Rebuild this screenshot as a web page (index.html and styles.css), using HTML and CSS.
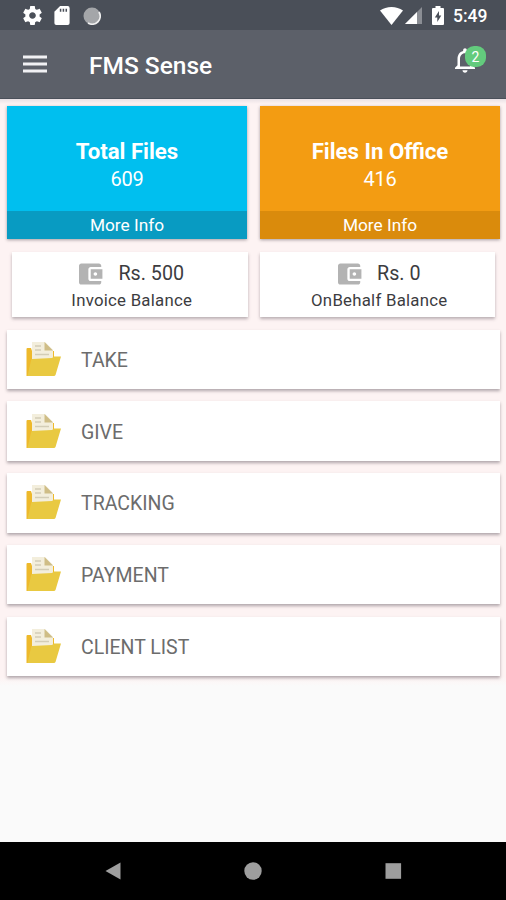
FILE: index.html
```html
<!DOCTYPE html>
<html lang="en">
<head>
<meta charset="utf-8">
<title>FMS Sense</title>
<link rel="stylesheet" href="styles.css">
</head>
<body>
<svg class="defs" width="0" height="0">
  <symbol id="folder" viewBox="0 0 36 36">
    <path fill="#eeb92b" d="M.5 7q0-1 1-1H5l1 3h22v11L5 34H.5z"/>
    <path fill="#f3eedc" d="M6 0h13l8 8v10H6z"/>
    <path fill="#cfbd86" d="M18.500 0v8.500H27z"/>
    <path stroke="#d3cdb6" stroke-width="1.300" d="M9 4h6M9 8h6M9 12.500h14"/>
    <path fill="#e9c941" d="M6 17l20-1 2-1.500h7L29.500 33q-.5 1-1.500 1H1.500L5 18.500q.2-1.500 1-1.500z"/>
  </symbol>
  <symbol id="wallet" viewBox="2 3 20.500 18">
    <path fill="#b3b3b3" d="M21 18v1c0 1.100-.9 2-2 2H4c-1.110 0-2-.9-2-2V5c0-1.100.89-2 2-2h15c1.100 0 2 .9 2 2v1h-9c-1.110 0-2 .9-2 2v8c0 1.100.89 2 2 2h9zm-9-2h10V8H12v8zm4-2.500c-.83 0-1.500-.67-1.500-1.500s.67-1.500 1.500-1.500 1.500.67 1.500 1.500-.67 1.500-1.500 1.500z"/>
  </symbol>
</svg>
<div class="status">
  <svg class="gear" viewBox="2 2 20 20"><path fill="#fff" d="M19.430 12.980c.04-.32.07-.64.07-.98s-.03-.66-.07-.98l2.110-1.650c.19-.15.24-.42.12-.64l-2-3.460c-.12-.22-.39-.3-.61-.22l-2.490 1c-.52-.4-1.080-.73-1.690-.98l-.38-2.650C14.460 2.180 14.250 2 14 2h-4c-.25 0-.46.18-.49.42l-.38 2.650c-.61.25-1.170.59-1.690.98l-2.490-1c-.23-.09-.49 0-.61.22l-2 3.460c-.13.22-.07.49.12.64l2.110 1.650c-.04.32-.07.65-.07.98s.03.66.07.98l-2.110 1.650c-.19.15-.24.42-.12.64l2 3.460c.12.22.39.3.61.22l2.490-1c.52.4 1.080.73 1.690.98l.38 2.650c.03.24.24.42.49.42h4c.25 0 .46-.18.49-.42l.38-2.650c.61-.25 1.170-.59 1.690-.98l2.490 1c.23.09.49 0 .61-.22l2-3.460c.12-.22.07-.49-.12-.64l-2.110-1.650zM12 15.500c-1.930 0-3.500-1.570-3.500-3.500s1.570-3.500 3.500-3.500 3.500 1.570 3.500 3.500-1.570 3.500-3.500 3.500z"/></svg>
  <svg class="sd" viewBox="0 0 16 20"><path fill="#fff" d="M6 0h8q2 0 2 2v16q0 2-2 2H2q-2 0-2-2V6z"/><path stroke="#4a4f58" stroke-width="1.600" d="M6.500 3v3M9.500 3v3M12.500 3v3"/></svg>
  <svg class="sync" viewBox="0 0 18 18"><circle cx="9" cy="9" r="8.500" fill="#a4a6a9"/><path fill="none" stroke="#f0f0f0" stroke-width="1.800" d="M16 5a8 8 0 0 1-11 11"/></svg>
  <svg class="wifi" viewBox="0 0 23 18"><path fill="#fff" d="M0 3.500Q5 0 11.500 0T23 3.500L11.500 18z"/></svg>
  <svg class="signal" viewBox="0 0 17 17"><path fill="#8b8e94" d="M17 0v17H0z"/><path fill="#fff" d="M12 5v12H0z"/></svg>
  <svg class="battery" viewBox="0 0 12 19"><path fill="#fff" d="M3.500 0h5v2H11q1 0 1 1v15q0 1-1 1H1q-1 0-1-1V3q0-1 1-1h2.500z"/><path fill="#4a4f58" d="M7 5L2.800 11.500h2.500V16l4-6.500H7z"/></svg>
  <span class="time">5:49</span>
</div>
<header class="bar">
  <svg class="menu" viewBox="0 0 24 18"><path stroke="#f1f1f4" stroke-width="2.800" d="M0 2h24M0 9h24M0 16h24"/></svg>
  <h1>FMS Sense</h1>
  <div class="bell">
    <svg viewBox="4 2.500 16 19.500"><path fill="#fff" d="M12 22c1.100 0 2-.9 2-2h-4c0 1.100.9 2 2 2zm6-6v-5c0-3.070-1.630-5.640-4.500-6.320V4c0-.83-.67-1.500-1.500-1.500s-1.500.67-1.500 1.500v.68C7.640 5.360 6 7.920 6 11v5l-2 2v1h16v-1l-2-2zm-2 1H8v-6c0-2.480 1.510-4.500 4-4.500s4 2.020 4 4.500v6z"/></svg>
    <span class="badge">2</span>
  </div>
</header>
<main>
  <section class="tiles">
    <article class="tile blue"><div class="tile-body"><h2>Total Files</h2><p>609</p></div><div class="more"><span>More Info</span></div></article>
    <article class="tile orange"><div class="tile-body"><h2>Files In Office</h2><p>416</p></div><div class="more"><span>More Info</span></div></article>
  </section>
  <section class="balances">
    <article class="balance"><div class="amount"><svg><use href="#wallet"/></svg><span>Rs. 500</span></div><p>Invoice Balance</p></article>
    <article class="balance"><div class="amount"><svg><use href="#wallet"/></svg><span>Rs. 0</span></div><p>OnBehalf Balance</p></article>
  </section>
  <nav class="list">
    <div class="row"><svg><use href="#folder"/></svg><span>TAKE</span></div>
    <div class="row"><svg><use href="#folder"/></svg><span>GIVE</span></div>
    <div class="row"><svg><use href="#folder"/></svg><span>TRACKING</span></div>
    <div class="row"><svg><use href="#folder"/></svg><span>PAYMENT</span></div>
    <div class="row"><svg><use href="#folder"/></svg><span>CLIENT LIST</span></div>
  </nav>
</main>
<footer class="keys">
  <svg viewBox="0 0 18 18"><path fill="#9e9e9e" d="M16.500 .5v17L1.500 9z"/></svg>
  <svg viewBox="0 0 18 18"><circle cx="9" cy="9" r="8.700" fill="#9e9e9e"/></svg>
  <svg viewBox="0 0 18 18"><path fill="#9e9e9e" d="M1.500 1.200h15.600v15.600H1.500z"/></svg>
</footer>
</body>
</html>
```
FILE: styles.css
```css
* { box-sizing: border-box; }
body {
  margin: 0;
  height: 900px;
  display: flex;
  flex-direction: column;
  overflow: hidden;
  background: #fafafa;
  font-family: Roboto, sans-serif;
}
h1, h2, p { margin: 0; }
svg { display: block; flex: none; }
.defs { display: none; }
.status {
  height: 30px;
  flex: none;
  display: flex;
  align-items: center;
  padding: 1px 19px 0 23px;
  background: #4a4f58;
}
.gear { width: 19px; height: 19px; }
.sd { width: 16px; height: 19px; margin-left: 12px; }
.sync { width: 18px; height: 18px; margin-left: 13px; }
.wifi { width: 23px; height: 18px; margin-left: auto; }
.signal { width: 17px; height: 17px; margin-left: 2px; }
.battery { width: 12px; height: 19px; margin-left: 10px; }
.time {
  width: 34px;
  margin-left: 9px;
  color: #fff;
  font-size: 17.500px;
  font-weight: 500;
  line-height: 20px;
}
.bar {
  height: 69px;
  flex: none;
  display: flex;
  align-items: center;
  padding: 0 20px 0 23px;
  border-bottom: 1px solid #4a505a;
  background: #5c6069;
}
.menu { width: 24px; height: 18px; }
.bar h1 {
  margin: 3px 0 0 42px;
  color: #fff;
  font-size: 24.500px;
  font-weight: 500;
  line-height: 30px;
}
.bell { position: relative; width: 31px; height: 28px; margin: -9px 0 0 auto; }
.bell svg { width: 20px; height: 25px; margin-top: 2px; }
.badge {
  position: absolute;
  top: 0;
  right: 0;
  width: 21px;
  height: 21px;
  border-radius: 9px;
  background: #63cb7d;
  color: #fff;
  font-size: 14px;
  line-height: 22px;
  text-align: center;
}
main {
  height: 587px;
  flex: none;
  padding: 6.500px 6px 0 7px;
  background: linear-gradient(#e9e1e5, #fdf3f3 5px, #fdf3f3 578px, #fafafa);
}
.tiles { display: grid; grid-template-columns: 1fr 1fr; gap: 13px; }
.tile {
  height: 133.500px;
  display: flex;
  flex-direction: column;
  color: #fff;
  text-align: center;
  box-shadow: 0 1px 3px rgba(60, 50, 60, .45);
}
.blue { background: #00bfef; }
.orange { background: #f39c12; }
.tile-body { flex: 1; padding-top: 31px; }
.tile h2 { font-size: 22.200px; font-weight: 700; line-height: 28px; }
.tile p { font-size: 20px; line-height: 28px; letter-spacing: -.3px; }
.more { height: 28px; background: #089bc2; font-size: 17.300px; line-height: 29px; }
.orange .more { background: #da8b0c; }
.balances {
  display: grid;
  grid-template-columns: 235.500px 234.500px;
  gap: 12.500px;
  padding: 12.500px 0 0 5px;
}
.balance {
  height: 65.500px;
  padding: 8px 0 0 4px;
  background: #fff;
  box-shadow: 0 2px 3px rgba(60, 50, 60, .35);
  color: #3c3c3f;
  text-align: center;
}
.amount { display: flex; justify-content: center; align-items: center; gap: 15px; height: 28px; font-size: 19.700px; }
.amount svg { width: 24px; height: 22px; }
.balance p { font-size: 16.800px; line-height: 24px; letter-spacing: .25px; }
.list { display: flex; flex-direction: column; gap: 12.250px; padding-top: 12.500px; }
.row {
  height: 59.500px;
  display: flex;
  align-items: center;
  gap: 19px;
  padding: 2px 0 0 19px;
  background: #fff;
  box-shadow: 0 2px 3px rgba(60, 50, 60, .4);
  color: #6c6c6c;
  font-size: 19.500px;
}
.row svg { width: 36px; height: 36px; margin-top: -1px; }
.keys {
  height: 58px;
  flex: none;
  display: flex;
  justify-content: space-between;
  align-items: center;
  margin-top: auto;
  padding: 0 104px;
  background: #000;
}
.keys svg { width: 18px; height: 18px; }
```
